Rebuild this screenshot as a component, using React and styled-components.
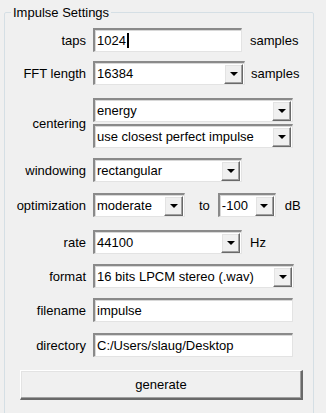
import styled, { createGlobalStyle } from "styled-components";

const Global = createGlobalStyle`
  html, body { margin: 0; padding: 0; background: #f0f0f0; }
  body {
    font-family: "Liberation Sans", Arial, sans-serif;
    font-size: 13px;
    color: #000;
  }
`;

const Page = styled.div`
  width: 326px;
  height: 413px;
  overflow: hidden;
  padding-top: 5px;
  box-sizing: border-box;
`;

const Group = styled.fieldset`
  margin: 0 0 0 4px;
  width: 310px;
  height: 420px;
  box-sizing: border-box;
  border: 1px solid #d5dfe5;
  border-radius: 2px;
  padding: 0;
`;

const Legend = styled.legend`
  margin-left: 6px;
  padding: 0 2px;
  font-size: 13px;
  line-height: 15px;
`;

const Rows = styled.div`
  display: flex;
  flex-direction: column;
  padding-top: 8px;
`;

const Row = styled.div`
  display: flex;
  align-items: center;
  gap: 8px;
  margin-top: ${(p) => p.$mt || 0}px;
`;

const Label = styled.div`
  width: 81px;
  text-align: right;
  flex: none;
  margin-right: -1px;
`;

const Stack = styled.div`
  display: flex;
  flex-direction: column;
  gap: 2px;
`;

const Unit = styled.span`
  margin-left: ${(p) => p.$ml || 0}px;
`;

const Field = styled.div`
  width: ${(p) => p.$w}px;
  height: 24px;
  box-sizing: border-box;
  background: #fff;
  border-top: 2px solid #8a8a8a;
  border-left: 2px solid #8a8a8a;
  border-right: 1px solid #e3e3e3;
  border-bottom: 1px solid #e3e3e3;
  box-shadow: inset 1px 1px 0 #d8d8d8;
  display: flex;
  align-items: center;
  padding-left: 2px;
  padding-right: 1px;
  white-space: nowrap;
  overflow: hidden;
`;

const Caret = styled.span`
  display: inline-block;
  width: 2px;
  height: 15px;
  background: #000;
  margin-left: 1px;
`;

const ArrowBtn = styled.div`
  margin-left: auto;
  width: 19px;
  height: 20px;
  flex: none;
  box-sizing: border-box;
  background: #f0f0f0;
  border-top: 1px solid #fff;
  border-left: 1px solid #fff;
  border-right: 1px solid #696969;
  border-bottom: 1px solid #696969;
  box-shadow: inset -1px -1px 0 #a0a0a0, inset 1px 1px 0 #e3e3e3;
  display: flex;
  align-items: center;
  justify-content: center;
`;

const Arrow = () => (
  <svg width="8" height="4" viewBox="0 0 8 4">
    <path d="M0 0h8L4 4z" fill="#000" />
  </svg>
);

const Select = ({ w, value }) => (
  <Field $w={w}>
    <span>{value}</span>
    <ArrowBtn>
      <Arrow />
    </ArrowBtn>
  </Field>
);

const Button = styled.div`
  margin: 13px 0 0 15px;
  width: 283px;
  height: 30px;
  box-sizing: border-box;
  background: #f0f0f0;
  border-top: 1px solid #fff;
  border-left: 1px solid #fff;
  border-right: 2px solid #696969;
  border-bottom: 2px solid #696969;
  box-shadow: inset -1px -1px 0 #a0a0a0, inset 1px 1px 0 #e3e3e3;
  display: flex;
  align-items: center;
  justify-content: center;
`;

export default function App() {
  return (
    <Page>
      <Global />
      <Group>
        <Legend>Impulse Settings</Legend>
        <Rows>
          <Row>
            <Label>taps</Label>
            <Field $w={149}>
              1024
              <Caret />
            </Field>
            <Unit>samples</Unit>
          </Row>
          <Row $mt={9}>
            <Label>FFT length</Label>
            <Select w={152} value="16384" />
            <Unit $ml={-2}>samples</Unit>
          </Row>
          <Row $mt={13}>
            <Label>centering</Label>
            <Stack>
              <Select w={200} value="energy" />
              <Select w={200} value="use closest perfect impulse" />
            </Stack>
          </Row>
          <Row $mt={10}>
            <Label>windowing</Label>
            <Select w={149} value="rectangular" />
          </Row>
          <Row $mt={11}>
            <Label>optimization</Label>
            <Select w={92} value="moderate" />
            <Unit $ml={6}>to</Unit>
            <Select w={58} value="-100" />
            <Unit $ml={1}>dB</Unit>
          </Row>
          <Row $mt={13}>
            <Label>rate</Label>
            <Select w={149} value="44100" />
            <Unit>Hz</Unit>
          </Row>
          <Row $mt={10}>
            <Label>format</Label>
            <Select w={201} value="16 bits LPCM stereo (.wav)" />
          </Row>
          <Row $mt={10}>
            <Label>filename</Label>
            <Field $w={200}>impulse</Field>
          </Row>
          <Row $mt={11}>
            <Label>directory</Label>
            <Field $w={200}>C:/Users/slaug/Desktop</Field>
          </Row>
          <Button>generate</Button>
        </Rows>
      </Group>
    </Page>
  );
}
